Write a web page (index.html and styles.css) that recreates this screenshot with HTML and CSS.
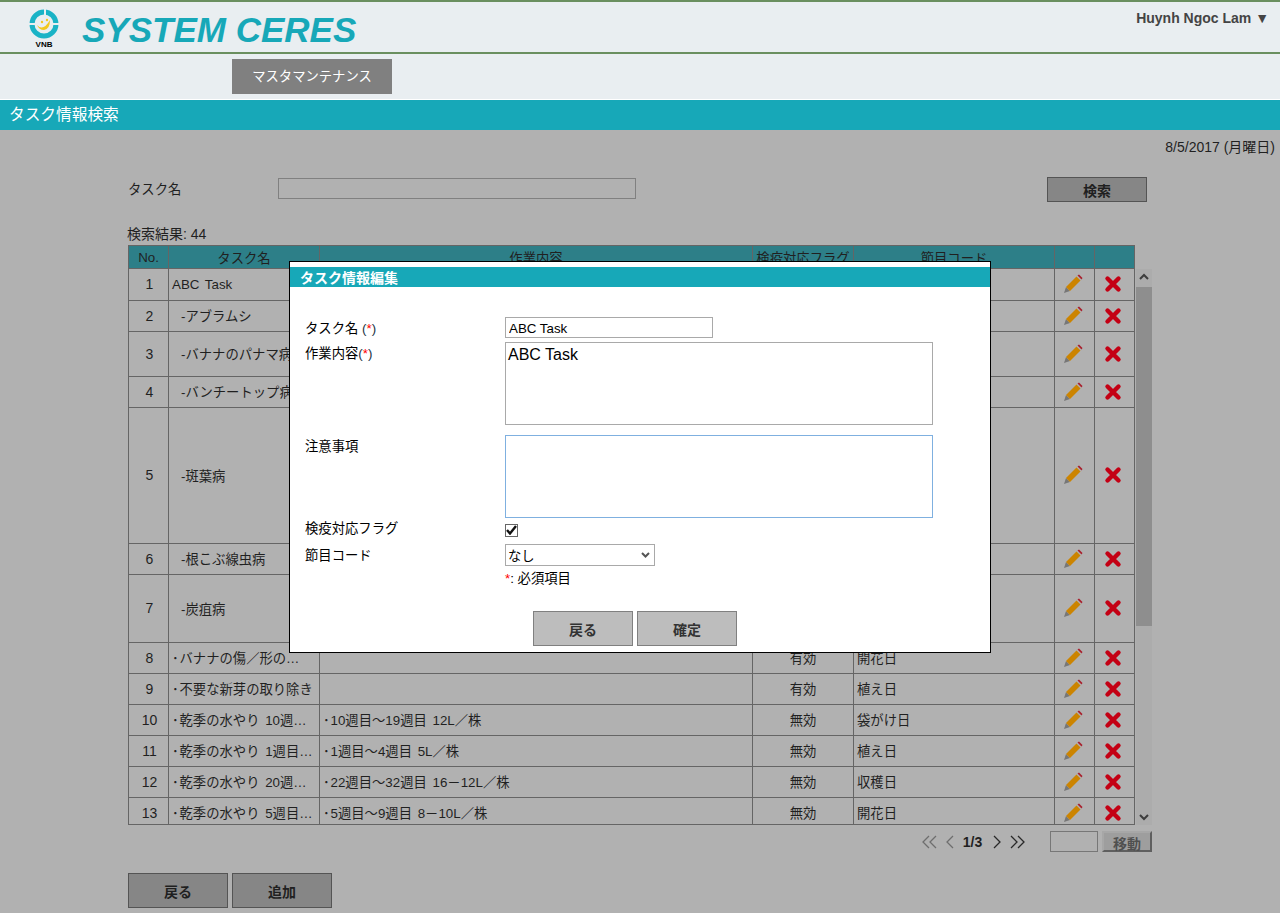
FILE: index.html
```html
<!DOCTYPE html>
<html lang="ja">

<head>
    <meta charset="UTF-8">
    <title>タスク情報検索</title>
    <link rel="stylesheet" href="styles.css">
</head>

<body>
    <div class="page">
        <header class="top">
            <div class="logo">
                <svg width="30" height="30" viewBox="0 0 30 30">
                    <circle cx="15" cy="15" r="12" fill="none" stroke="#1ab3c6" stroke-width="5" />
                    <rect x="15" y="0" width="2" height="8" fill="#e9eef1" />
                    <rect x="0" y="14" width="7" height="2" fill="#e9eef1" />
                    <rect x="23" y="14" width="7" height="2" fill="#e9eef1" />
                    <path d="M8 16 Q14 23 21 11 Q21 20 15 21 Q10 21 8 16Z" fill="#f2c81e" />
                    <circle cx="13" cy="13" r="1.2" fill="#f2c81e" />
                    <circle cx="18" cy="11" r="1.2" fill="#f2c81e" />
                </svg>
                <span class="logo-text">VNB</span>
            </div>
            <div class="brand">SYSTEM CERES</div>
            <div class="user">Huynh Ngoc Lam ▼</div>
        </header>
        <nav class="menu">
            <a class="menu-item">マスタマンテナンス</a>
        </nav>
        <div class="title-bar">タスク情報検索</div>

        <main class="content">
            <div class="date">8/5/2017 (月曜日)</div>
            <div class="search">
                <label class="search-label">タスク名</label>
                <input type="text" class="search-input">
                <button class="btn search-btn">検索</button>
            </div>
            <div class="count">検索結果: 44</div>

            <table class="grid grid-head">
                <colgroup>
                    <col class="c-no"><col class="c-name"><col class="c-work"><col class="c-flag"><col class="c-code"><col class="c-icon"><col class="c-icon">
                </colgroup>
                <tr>
                    <th>No.</th>
                    <th>タスク名</th>
                    <th>作業内容</th>
                    <th>検疫対応フラグ</th>
                    <th>節目コード</th>
                    <th></th>
                    <th></th>
                </tr>
            </table>
            <div class="grid-wrap">
                <div class="grid-body">
                    <table class="grid" id="rows">
                        <colgroup>
                            <col class="c-no"><col class="c-name"><col class="c-work"><col class="c-flag"><col class="c-code"><col class="c-icon"><col class="c-icon">
                        </colgroup>
                    </table>
                </div>
                <div class="scrollbar">
                    <svg class="arrow" width="16" height="17" viewBox="0 0 16 17"><path d="M4 10 L8 6 L12 10" fill="none" stroke="#333" stroke-width="2" /></svg>
                    <div class="thumb"></div>
                    <svg class="arrow arrow-down" width="16" height="17" viewBox="0 0 16 17"><path d="M4 7 L8 11 L12 7" fill="none" stroke="#333" stroke-width="2" /></svg>
                </div>
            </div>

            <div class="pager">
                <svg width="16" height="14" viewBox="0 0 16 14"><path d="M7 1 L1 7 L7 13 M14 1 L8 7 L14 13" fill="none" stroke="#8a8a8a" stroke-width="1.3" /></svg>
                <svg class="pg-prev" width="9" height="14" viewBox="0 0 9 14"><path d="M7 1 L1 7 L7 13" fill="none" stroke="#8a8a8a" stroke-width="1.3" /></svg>
                <span class="pg-num">1/3</span>
                <svg class="pg-next" width="9" height="14" viewBox="0 0 9 14"><path d="M1 1 L7 7 L1 13" fill="none" stroke="#111" stroke-width="1.3" /></svg>
                <svg class="pg-last" width="16" height="14" viewBox="0 0 16 14"><path d="M1 1 L7 7 L1 13 M8 1 L14 7 L8 13" fill="none" stroke="#111" stroke-width="1.3" /></svg>
                <input type="text" class="pg-input">
                <button class="pg-btn">移動</button>
            </div>

            <div class="actions">
                <button class="btn">戻る</button>
                <button class="btn">追加</button>
            </div>
        </main>

        <div class="overlay">
            <div class="modal">
                <div class="modal-title">タスク情報編集</div>
                <div class="form">
                    <div class="form-row row-name">
                        <label>タスク名 <span class="paren">(<span class="req">*</span>)</span></label>
                        <input type="text" class="name-input" value="ABC Task">
                    </div>
                    <div class="form-row row-area">
                        <label>作業内容<span class="paren">(<span class="req">*</span>)</span></label>
                        <textarea class="area">ABC Task</textarea>
                    </div>
                    <div class="form-row row-area">
                        <label>注意事項</label>
                        <textarea class="area area-focus"></textarea>
                    </div>
                    <div class="form-row row-check">
                        <label>検疫対応フラグ</label>
                        <span class="check">
                            <svg width="11" height="10" viewBox="0 0 11 10"><path d="M1 5 L4 8.5 L10 1" fill="none" stroke="#111" stroke-width="2.4" /></svg>
                        </span>
                    </div>
                    <div class="form-row row-select">
                        <label>節目コード</label>
                        <div class="select">
                            <span>なし</span>
                            <svg width="9" height="6" viewBox="0 0 9 6"><path d="M1 1 L4.5 4.5 L8 1" fill="none" stroke="#555" stroke-width="2" /></svg>
                        </div>
                    </div>
                    <div class="note"><span class="req">*</span>: 必須項目</div>
                    <div class="modal-actions">
                        <button class="btn btn-light">戻る</button>
                        <button class="btn btn-light">確定</button>
                    </div>
                </div>
            </div>
        </div>
    </div>

    <script>
        const dot = '<span class="dot">･</span>';
        const rows = [
            [1, "ABC Task", "", "", "", 31, 0],
            [2, "-アブラムシ", "", "", "", 31, 1],
            [3, "-バナナのパナマ病", "", "", "", 45, 1],
            [4, "-バンチートップ病", "", "", "", 31, 1],
            [5, "-斑葉病", "", "", "", 136, 1],
            [6, "-根こぶ線虫病", "", "", "", 31, 1],
            [7, "-炭疽病", "", "", "", 68, 1],
            [8, dot + "バナナの傷／形の…", "", "有効", "開花日", 31, 0],
            [9, dot + "不要な新芽の取り除き", "", "有効", "植え日", 31, 0],
            [10, dot + "乾季の水やり 10週目～19週目", dot + "10週目～19週目 12L／株", "無効", "袋がけ日", 31, 0],
            [11, dot + "乾季の水やり 1週目～4週目", dot + "1週目～4週目 5L／株", "無効", "植え日", 31, 0],
            [12, dot + "乾季の水やり 20週目～32週目", dot + "22週目～32週目 16－12L／株", "無効", "収穫日", 31, 0],
            [13, dot + "乾季の水やり 5週目～9週目", dot + "5週目～9週目 8－10L／株", "無効", "開花日", 31, 0]
        ];

        const pencil = `<svg width="20" height="20" viewBox="0 0 20 20">
            <path d="M1 19 L3 13 L7 17Z" fill="#777" />
            <path d="M3 13 L13.5 2.5 L17.5 6.5 L7 17Z" fill="#cc8400" />
            <path d="M14.5 1.5 L16 0.5 L19.5 4 L18.5 5.5Z" fill="#a8202e" />
        </svg>`;
        const cross = `<svg width="18" height="18" viewBox="0 0 18 18">
            <path d="M3.5 3.5 L14.5 14.5 M14.5 3.5 L3.5 14.5" fill="none" stroke="#c40014" stroke-width="4.4" stroke-linecap="round" />
        </svg>`;

        let html = "";
        rows.forEach((r) => {
            html += `<tr style="height:${r[5]}px">
                <td class="num">${r[0]}</td>
                <td class="cut${r[6] ? " sub" : ""}">${r[1]}</td>
                <td class="cut">${r[2]}</td>
                <td class="mid">${r[3]}</td>
                <td class="cut">${r[4]}</td>
                <td class="mid icon">${pencil}</td>
                <td class="mid icon">${cross}</td>
            </tr>`;
        });
        document.getElementById("rows").insertAdjacentHTML("beforeend", html);
    </script>
</body>

</html>
```

FILE: styles.css
```css
* {
    box-sizing: border-box;
}

html,
body {
    margin: 0;
    padding: 0;
    overflow: hidden;
}

body {
    background-color: white;
    color: black;
    font-family: "Liberation Sans", "Noto Sans CJK JP", sans-serif;
    font-size: 13.33px;
}

.page {
    position: relative;
    height: 913px;
}

.top {
    display: flex;
    height: 54px;
    background-color: #e9eef1;
    border-top: 2px solid #6a8f5f;
    border-bottom: 2px solid #6a8f5f;
}

.logo {
    display: flex;
    flex-direction: column;
    align-items: center;
    width: 30px;
    margin: 7px 0 0 29px;
}

.logo-text {
    margin-top: 1px;
    font-size: 8px;
    font-weight: bold;
    line-height: 9px;
}

.brand {
    margin: 7px 0 0 23px;
    color: #17a8b8;
    font-size: 35px;
    font-style: italic;
    font-weight: bold;
    line-height: 41px;
}

.user {
    margin: 8px 11px 0 auto;
    color: #444;
    font-size: 14px;
    font-weight: bold;
}

.menu {
    height: 45px;
    padding: 5px 0 0 232px;
    background-color: #e9eef1;
}

.menu-item {
    display: block;
    width: 160px;
    height: 35px;
    background-color: gray;
    color: white;
    line-height: 35px;
    text-align: center;
}

.title-bar {
    height: 31px;
    padding-left: 9px;
    background-color: #17a8b8;
    border-top: 1px solid white;
    color: white;
    font-size: 15.7px;
    line-height: 30px;
}

.content {
    padding: 0 0 0 128px;
}

.date {
    height: 24px;
    margin-right: 5px;
    padding-top: 8px;
    font-size: 14px;
    line-height: 18px;
    text-align: right;
}

.search {
    display: flex;
    align-items: center;
    width: 1019px;
    height: 25px;
    margin-top: 23px;
}

.search-label {
    width: 150px;
    margin-bottom: 2px;
}

.search-input {
    width: 358px;
    height: 21px;
    margin-bottom: 2px;
    border: 1px solid #a9a9a9;
    background-color: white;
}

.btn {
    width: 100px;
    height: 35px;
    padding: 0;
    background-color: #b4b4b4;
    border: 1px solid #5c5c5c;
    color: black;
    font-family: inherit;
    font-size: 14px;
    font-weight: bold;
}

.search-btn {
    height: 25px;
    margin-left: auto;
}

.count {
    height: 20px;
    margin-top: 23px;
    margin-left: -1px;
    font-size: 14px;
    line-height: 18px;
}

.grid {
    width: 1007px;
    border-collapse: collapse;
    table-layout: fixed;
}

.c-no {
    width: 40px;
}

.c-name {
    width: 151px;
}

.c-work {
    width: 433px;
}

.c-flag {
    width: 101px;
}

.c-code {
    width: 201px;
}

.c-icon {
    width: 40px;
}

.grid th,
.grid td {
    border: 1px solid #7a7a7a;
    padding: 0 3px;
    font-size: 13.33px;
    word-spacing: 2px;
}

.grid th {
    height: 23px;
    background-color: #17a8b8;
    font-weight: normal;
    overflow: hidden;
    white-space: nowrap;
}

.grid-head {
    height: 23px;
}

.grid-wrap {
    display: flex;
    width: 1024px;
}

.grid-body {
    width: 1007px;
    height: 556px;
    overflow: hidden;
    border-bottom: 1px solid #7a7a7a;
}

.grid-body tr:first-child td {
    border-top: 0;
}

.dot {
    display: inline-block;
    width: 7.5px;
}

.cut {
    overflow: hidden;
    text-overflow: ellipsis;
    white-space: nowrap;
}

.grid .sub {
    padding-left: 12px;
}

.num,
.mid {
    text-align: center;
}

.grid .num {
    padding: 0 2px 0 4px;
    font-size: 14px;
}

.grid .icon {
    padding: 0 5px 0 1px;
}

/* icons keep their strong colours, they sit above the dimmed layer */
.icon svg {
    display: block;
    position: relative;
    z-index: 2;
    margin: auto;
}

.scrollbar {
    display: flex;
    flex-direction: column;
    width: 16px;
    height: 556px;
    margin-left: 1px;
    background-color: #f6f6f6;
}

.arrow {
    flex: none;
}

.thumb {
    height: 339px;
    margin-top: 1px;
    background-color: #c1c1c1;
}

.arrow-down {
    margin-top: auto;
}

.pager {
    display: flex;
    align-items: center;
    width: 1024px;
    height: 21px;
    margin-top: 6px;
    padding-left: 794px;
}

.pg-prev {
    margin-left: 8px;
}

.pg-num {
    width: 33px;
    margin-left: 1px;
    font-size: 14px;
    font-weight: bold;
    text-align: center;
}

.pg-next {
    margin-left: 4px;
}

.pg-last {
    margin-left: 8px;
}

.pg-input {
    width: 48px;
    height: 21px;
    margin-left: auto;
    border: 1px solid #999;
    background-color: white;
}

.pg-btn {
    width: 50px;
    height: 21px;
    margin-left: 4px;
    padding: 0;
    background-color: #ddd;
    border: 2px solid;
    border-color: #eee #707070 #707070 #eee;
    color: #555;
    font-family: inherit;
    font-size: 14px;
    font-weight: bold;
}

.actions {
    display: flex;
    gap: 4px;
    margin-top: 21px;
}

.overlay {
    position: absolute;
    top: 130px;
    left: 0;
    right: 0;
    bottom: 0;
    background-color: rgba(74, 74, 74, 0.43);
}

.modal {
    position: absolute;
    top: 131px;
    left: 289px;
    width: 702px;
    height: 392px;
    padding-top: 5px;
    background-color: white;
    border: 1px solid black;
}

.modal-title {
    height: 20px;
    padding-left: 10px;
    background-color: #17a8b8;
    color: white;
    font-size: 14px;
    font-weight: bold;
    line-height: 22px;
}

.form {
    padding: 30px 0 0 15px;
}

.form-row {
    display: flex;
}

.form-row label {
    width: 200px;
    padding-top: 1px;
    line-height: 21px;
}

.paren {
    color: #234;
}

.req {
    color: red;
}

.row-name {
    height: 25px;
}

.name-input {
    width: 208px;
    height: 21px;
    padding: 1px 3px 0;
    border: 1px solid #a9a9a9;
    font-family: inherit;
    font-size: 13.33px;
}

.row-area {
    height: 93px;
}

.area {
    width: 428px;
    height: 83px;
    padding: 3px 2px 2px;
    border: 1px solid #a9a9a9;
    font-family: inherit;
    font-size: 16px;
    resize: none;
}

.area-focus {
    border-color: #7fb0e0;
}

.row-check {
    height: 26px;
    margin-top: -11px;
    align-items: center;
}

.row-check label {
    margin-bottom: 4px;
}

.check {
    display: flex;
    align-items: center;
    justify-content: center;
    width: 13px;
    height: 13px;
    border: 1px solid #666;
}

.row-select {
    height: 22px;
    margin-top: 1px;
}

.select {
    display: flex;
    align-items: center;
    justify-content: space-between;
    width: 150px;
    height: 22px;
    padding: 0 4px 0 2px;
    border: 1px solid #a9a9a9;
    font-size: 13.33px;
}

.note {
    height: 26px;
    margin-left: 200px;
    padding-top: 4px;
    line-height: 18px;
}

.modal-actions {
    display: flex;
    justify-content: center;
    gap: 4px;
    width: 660px;
    margin-top: 19px;
}

.btn-light {
    background-color: #bdbdbd;
    border-color: #808080;
    color: #333;
}
```
